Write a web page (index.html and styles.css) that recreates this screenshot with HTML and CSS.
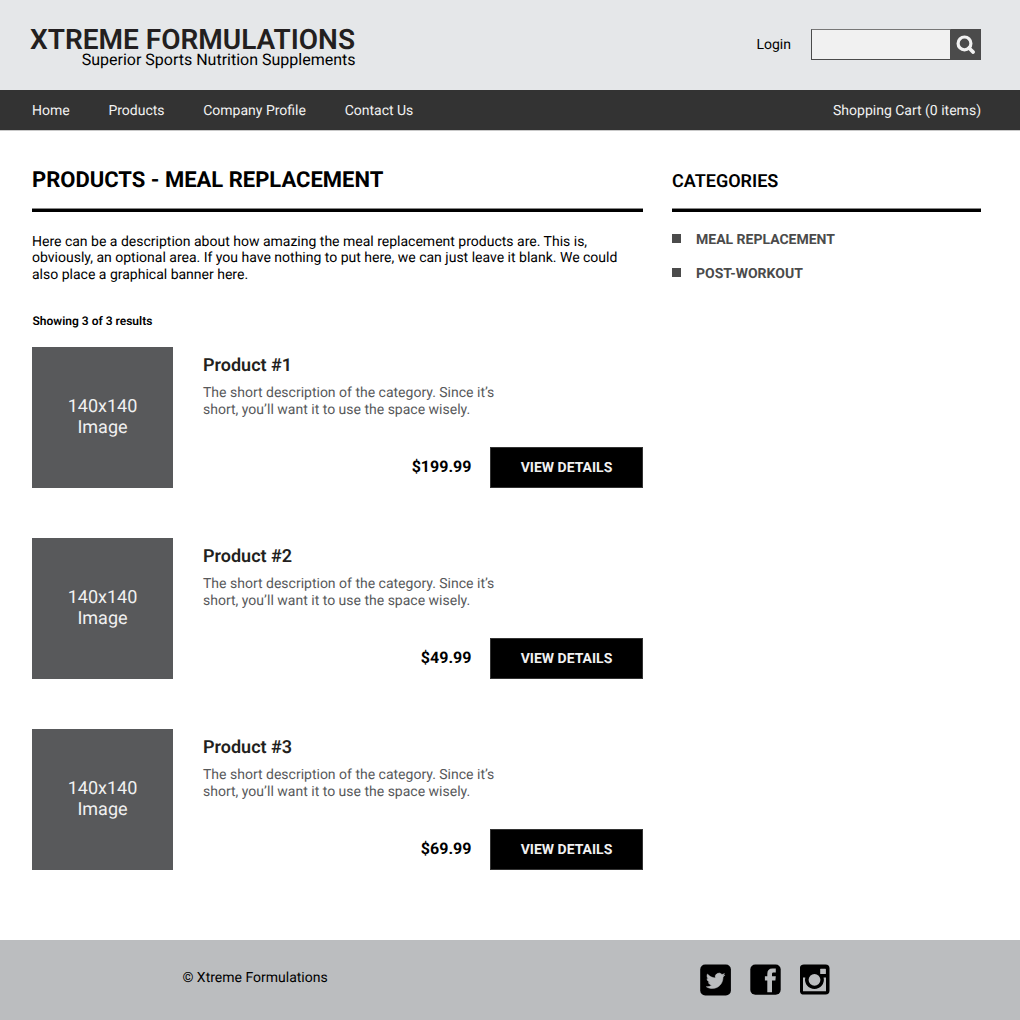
FILE: index.html
```html
<!DOCTYPE html>
<html lang="en">
<head>
<meta charset="utf-8">
<title>Xtreme Formulations</title>
<link rel="stylesheet" href="styles.css">
</head>
<body>
<header class="header">
  <div class="brand">
    <h1 class="brand-name">XTREME FORMULATIONS</h1>
    <p class="brand-tagline">Superior Sports Nutrition Supplements</p>
  </div>
  <div class="tools">
    <a class="login">Login</a>
    <form class="search">
      <input class="search-input" type="text" aria-label="Search">
      <button class="search-button" type="button" aria-label="Search">
        <svg width="20" height="20" viewBox="0 0 20 20" fill="none" stroke="#f1f1f1"><circle cx="8.5" cy="8.400" r="6.400" stroke-width="3.200"/><path d="M13 13L17.200 17.100" stroke-width="3.600" stroke-linecap="round"/></svg>
      </button>
    </form>
  </div>
</header>
<nav class="nav">
  <div class="nav-links">
    <a>Home</a><a>Products</a><a>Company Profile</a><a>Contact Us</a>
  </div>
  <a class="cart">Shopping Cart (0 items)</a>
</nav>
<main class="content">
  <section class="products">
    <h2 class="page-title">PRODUCTS - MEAL REPLACEMENT</h2>
    <p class="intro">Here can be a description about how amazing the meal replacement products are. This is,<br>obviously, an optional area. If you have nothing to put here, we can just leave it blank. We could<br>also place a graphical banner here.</p>
    <p class="results">Showing 3 of 3 results</p>
    <div class="product-list">
      <article class="product">
        <div class="thumb">140x140<br>Image</div>
        <div class="product-body">
          <h3 class="product-name">Product #1</h3>
          <p class="product-text">The short description of the category. Since it’s<br>short, you’ll want it to use the space wisely.</p>
          <div class="product-buy"><span class="price">$199.99</span><a class="button">VIEW DETAILS</a></div>
        </div>
      </article>
      <article class="product">
        <div class="thumb">140x140<br>Image</div>
        <div class="product-body">
          <h3 class="product-name">Product #2</h3>
          <p class="product-text">The short description of the category. Since it’s<br>short, you’ll want it to use the space wisely.</p>
          <div class="product-buy"><span class="price">$49.99</span><a class="button">VIEW DETAILS</a></div>
        </div>
      </article>
      <article class="product">
        <div class="thumb">140x140<br>Image</div>
        <div class="product-body">
          <h3 class="product-name">Product #3</h3>
          <p class="product-text">The short description of the category. Since it’s<br>short, you’ll want it to use the space wisely.</p>
          <div class="product-buy"><span class="price">$69.99</span><a class="button">VIEW DETAILS</a></div>
        </div>
      </article>
    </div>
  </section>
  <aside class="sidebar">
    <h2 class="sidebar-title">CATEGORIES</h2>
    <ul class="categories">
      <li>MEAL REPLACEMENT</li>
      <li>POST-WORKOUT</li>
    </ul>
  </aside>
</main>
<footer class="footer">
  <p class="copyright">© Xtreme Formulations</p>
  <div class="social">
    <svg width="31" height="32" viewBox="0 0 31 32"><rect x=".2" y=".5" width="30.7" height="31" rx="5"/><path fill="#bbbdbf" d="M24.900 11.100c-.7.3-1.4.5-2.200.6.8-.5 1.400-1.200 1.700-2.100-.7.4-1.600.8-2.400.9a3.800 3.800 0 0 0-6.600 3.500c-3.200-.2-6-1.700-7.900-4-.3.6-.5 1.200-.5 1.900 0 1.300.7 2.500 1.700 3.200-.6 0-1.200-.2-1.700-.5 0 1.900 1.300 3.400 3.100 3.800-.6.1-1.100.2-1.700.1.5 1.500 1.900 2.600 3.600 2.600A7.700 7.700 0 0 1 6.300 22.700c1.700 1.100 3.700 1.800 5.900 1.800 7.300 0 11-6.100 10.800-11.500.8-.5 1.400-1.200 1.900-1.900z" stroke="#bbbdbf" stroke-width=".5"/></svg>
    <svg width="31" height="32" viewBox="0 0 31 32"><rect x=".3" y=".5" width="30.4" height="30.300" rx="5"/><path fill="#bbbdbf" d="M17.300 28.300V16.400H14.900V12.300H17.300V9.900C17.300 6.300 19 4.400 22.400 4.400H25.800V8.400H23.700C22.300 8.400 22 9 22 10.200V12.300H25.800L25.400 16.400H22V28.300Z"/></svg>
    <svg width="31" height="32" viewBox="1 0 31 32"><rect x=".9" y=".5" width="29.600" height="30" rx="4"/><path fill="#bbbdbf" d="M4 13.500H6.300A9.400 9.400 0 1 0 24.600 13.500H27V27.300H4Z"/><circle cx="15.500" cy="15.800" r="5.900" fill="#bbbdbf"/><rect x="21.200" y="4.700" width="5.700" height="5.400" rx=".5" fill="#bbbdbf"/></svg>
  </div>
</footer>
</body>
</html>
```
FILE: styles.css
```css
* { box-sizing: border-box; margin: 0; padding: 0; }
body {
  width: 1020px;
  height: 1020px;
  display: flex;
  flex-direction: column;
  font: 14px/16.6px Roboto, "Liberation Sans", sans-serif;
  text-rendering: geometricPrecision;
  color: #000;
  background: #fff;
}
.header {
  height: 90px;
  display: flex;
  justify-content: space-between;
  padding: 26px 39px 0 30px;
  background: #e5e7e9;
}
.brand { text-align: right; }
.brand-name { font-size: 28px; line-height: 28px; font-weight: 600; color: #231f20; }
.brand-tagline { font-size: 16px; line-height: 14px; margin: -1px -0.5px 0 0; }
.tools { display: flex; gap: 20px; padding-top: 3px; }
.login { line-height: 32px; }
.search { display: flex; width: 170px; height: 31px; }
.search-input { width: 140px; height: 31px; border: 1px solid #4b4b4b; border-top-color: #777; background: #f1f1f1; }
.search-button { display: flex; align-items: center; justify-content: center; width: 30px; height: 31px; border: 0; background: #4b4b4b; }
.nav {
  height: 41px;
  display: flex;
  justify-content: space-between;
  padding: 0 39px 0 32px;
  line-height: 42px;
  color: #f1f1f1;
  background: #333;
  border-bottom: 1px solid #c9c9c9;
}
.nav-links { display: flex; gap: 38.7px; }
.content { flex: 1; display: flex; gap: 29px; padding: 32px 39px 0 32px; }
.products { width: 611px; }
.page-title, .sidebar-title {
  height: 49px;
  font-weight: 700;
  line-height: 36px;
  border-bottom: 3px solid #000;
  box-shadow: inset 0 -1px #888;
}
.page-title { font-size: 22px; }
.intro { height: 50px; margin-top: 21.8px; }
.results { margin: 29.2px 0 0 0.5px; height: 17px; font-size: 12px; font-weight: 600; }
.product-list { display: flex; flex-direction: column; gap: 50px; margin-top: 17px; }
.product { display: flex; gap: 30px; height: 141px; }
.thumb {
  width: 141px;
  padding-top: 49px;
  font-size: 18px;
  line-height: 21px;
  text-align: center;
  color: #f1f1f1;
  background: #58595b;
}
.product-body { flex: 1; display: flex; flex-direction: column; padding-top: 8px; }
.product-name { font-size: 18px; line-height: 22px; font-weight: 600; color: #231f20; }
.product-text { margin-top: 8px; line-height: 17px; color: #58595b; }
.product-buy { display: flex; justify-content: flex-end; align-items: center; gap: 18.6px; margin-top: auto; }
.price { font-size: 16px; font-weight: 700; }
.button {
  width: 153px;
  height: 41px;
  line-height: 40px;
  font-weight: 700;
  text-align: center;
  color: #f1f1f1;
  background: #000;
  border: 1px solid #333;
}
.sidebar { width: 309px; }
.sidebar-title { font-size: 18px; line-height: 38px; font-weight: 600; }
.categories { display: flex; flex-direction: column; gap: 17px; margin-top: 20px; list-style: none; font-weight: 700; color: #4b4b4b; }
.categories li { display: flex; align-items: center; gap: 15px; height: 17px; }
.categories li::before { content: ""; width: 9px; height: 9px; background: #4b4b4b; margin-top: -4px; }
.footer { height: 80px; display: flex; padding: 24px 0 0 182.4px; background: #bbbdbf; }
.copyright { width: 517.6px; line-height: 28px; }
.social { display: flex; gap: 19px; }
```
